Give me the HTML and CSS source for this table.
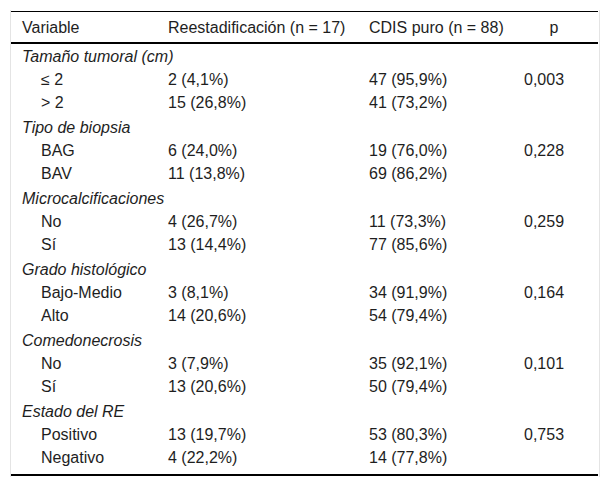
FILE: index.html
```html
<!DOCTYPE html>
<html lang="es">
<head>
<meta charset="utf-8">
<link rel="stylesheet" href="styles.css">
</head>
<body>
<div class="frame">
<table class="t">
<colgroup>
<col class="c1"><col class="c2"><col class="c3"><col class="c4">
</colgroup>
<thead>
<tr><th>Variable</th><th>Reestadificación (n = 17)</th><th>CDIS puro (n = 88)</th><th class="pc">p</th></tr>
</thead>
<tbody>
<tr class="grp"><td colspan="4">Tamaño tumoral (cm)</td></tr>
<tr><td class="sub">≤ 2</td><td>2 (4,1%)</td><td>47 (95,9%)</td><td class="pv">0,003</td></tr>
<tr class="end"><td class="sub">&gt; 2</td><td>15 (26,8%)</td><td>41 (73,2%)</td><td class="pv"></td></tr>
<tr class="grp"><td colspan="4">Tipo de biopsia</td></tr>
<tr><td class="sub">BAG</td><td>6 (24,0%)</td><td>19 (76,0%)</td><td class="pv">0,228</td></tr>
<tr class="end"><td class="sub">BAV</td><td>11 (13,8%)</td><td>69 (86,2%)</td><td class="pv"></td></tr>
<tr class="grp"><td colspan="4">Microcalcificaciones</td></tr>
<tr><td class="sub">No</td><td>4 (26,7%)</td><td>11 (73,3%)</td><td class="pv">0,259</td></tr>
<tr class="end"><td class="sub">Sí</td><td>13 (14,4%)</td><td>77 (85,6%)</td><td class="pv"></td></tr>
<tr class="grp"><td colspan="4">Grado histológico</td></tr>
<tr><td class="sub">Bajo-Medio</td><td>3 (8,1%)</td><td>34 (91,9%)</td><td class="pv">0,164</td></tr>
<tr class="end"><td class="sub">Alto</td><td>14 (20,6%)</td><td>54 (79,4%)</td><td class="pv"></td></tr>
<tr class="grp"><td colspan="4">Comedonecrosis</td></tr>
<tr><td class="sub">No</td><td>3 (7,9%)</td><td>35 (92,1%)</td><td class="pv">0,101</td></tr>
<tr class="end"><td class="sub">Sí</td><td>13 (20,6%)</td><td>50 (79,4%)</td><td class="pv"></td></tr>
<tr class="grp"><td colspan="4">Estado del RE</td></tr>
<tr><td class="sub">Positivo</td><td>13 (19,7%)</td><td>53 (80,3%)</td><td class="pv">0,753</td></tr>
<tr class="end last"><td class="sub">Negativo</td><td>4 (22,2%)</td><td>14 (77,8%)</td><td class="pv"></td></tr>
</tbody>
</table>
</div>
</body>
</html>
```
FILE: styles.css
```css
html, body {
  margin: 0;
  padding: 0;
  background: #fff;
}
body {
  font-family: "Liberation Sans", Arial, sans-serif;
  font-size: 16px;
  color: #1e1e1e;
}
.frame {
  margin: 10px 0 0 10px;
  width: 588px;
  border-left: 1px solid #e4e4e4;
  border-right: 1px solid #e4e4e4;
  padding-top: 1px;
  padding-bottom: 1px;
}
.t {
  width: 587px;
  table-layout: fixed;
  border-collapse: collapse;
  border-top: 1px solid #000;
  border-bottom: 2px solid #000;
}
.c1 { width: 146px; }
.c2 { width: 201px; }
.c3 { width: 150px; }
.c4 { width: 90px; }
th {
  font-weight: normal;
  text-align: left;
  padding: 7px 0 6px 11px;
  line-height: 17px;
  white-space: nowrap;
  border-bottom: 2px solid #000;
}
th.pc { text-align: center; padding-left: 2px; padding-right: 0; }
td {
  padding: 3px 0 3px 11px;
  line-height: 17px;
  vertical-align: top;
  white-space: nowrap;
}
.grp td {
  font-style: italic;
  padding-top: 4px;
  padding-bottom: 3px;
}
.end td { padding-bottom: 4px; }
td.sub { padding-left: 30px; }
td.pv { padding-left: 16px; }
.last td { padding-bottom: 8px; }
```
